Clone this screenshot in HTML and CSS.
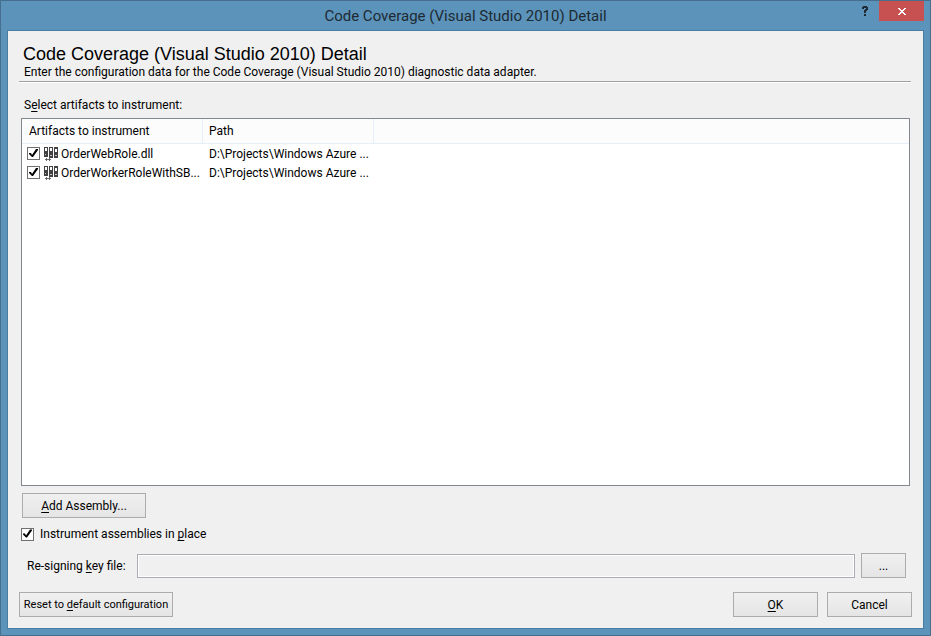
FILE: index.html
```html
<!DOCTYPE html>
<html lang="en">
<head>
<meta charset="utf-8">
<title>Code Coverage (Visual Studio 2010) Detail</title>
<link rel="stylesheet" href="styles.css">
</head>
<body>
<svg class="defs" aria-hidden="true">
  <symbol id="binders" viewBox="0 0 15 14">
    <path fill="#424242" d="M0 0h4v10H0zM5 0h4v11H5zM10 0h4v11h-4z"/>
    <path fill="#fff" d="M1 1h2v3H1zM6 1h2v3H6zM11 2h2v3h-2z"/>
    <path fill="#c8c8c8" d="M1 7h1v1H1zM6 8h2v1H6zM11 8h2v1h-2z"/>
    <path fill="#686868" d="M1 12h2v1H1zM2 11h1v3H2zM3 12h3v1H3zM5 11h1v3H5zM6 12h1v1H6z"/>
  </symbol>
</svg>
<div class="window">
  <header class="titlebar">
    <span class="titlebar-text">Code Coverage (Visual Studio 2010) Detail</span>
    <div class="caption-buttons">
      <button class="help" type="button" aria-label="Help"><svg width="6" height="10" viewBox="0 0 6 10"><path fill="#202a32" d="M1 0h4v1h1v3H5v1H4v2H2V4h1V3h1V2H2v1H0V1h1zM2 8h2v2H2z"/></svg></button>
      <button class="close" type="button" aria-label="Close"><svg width="8" height="7" viewBox="0 0 8 7"><path fill="#fff" d="M0 0h2v1h1v1h2V1h1V0h2v1H7v1H6v1H5v1h1v1h1v1h1v1H6V6H5V5H3v1H2v1H0V6h1V5h1V4h1V3H2V2H1V1H0z"/></svg></button>
    </div>
  </header>
  <main class="client">
    <div class="heading">
      <h1>Code Coverage (Visual Studio 2010) Detail</h1>
      <p>Enter the configuration data for the Code Coverage (Visual Studio 2010) diagnostic data adapter.</p>
    </div>
    <div class="list-label" id="list-label">S<u>e</u>lect artifacts to instrument:</div>
    <div class="list">
      <table aria-labelledby="list-label">
        <colgroup><col class="col-name"><col class="col-path"><col></colgroup>
        <thead>
          <tr><th>Artifacts to instrument</th><th>Path</th><td></td></tr>
        </thead>
        <tbody>
          <tr>
            <td><label class="item"><input type="checkbox" checked><svg class="icon"><use href="#binders"/></svg><span>OrderWebRole.dll</span></label></td>
            <td>D:\Projects\Windows Azure ...</td><td></td>
          </tr>
          <tr>
            <td><label class="item"><input type="checkbox" checked><svg class="icon"><use href="#binders"/></svg><span>OrderWorkerRoleWithSB...</span></label></td>
            <td>D:\Projects\Windows Azure ...</td><td></td>
          </tr>
        </tbody>
      </table>
    </div>
    <div class="options">
      <button class="btn add" type="button"><u>A</u>dd Assembly...</button>
      <label class="check"><input type="checkbox" checked><span>Instrument assemblies in <u>p</u>lace</span></label>
      <div class="key-row">
        <label for="key">Re-signing <u>k</u>ey file:</label>
        <input id="key" type="text" disabled>
        <button class="btn browse" type="button">...</button>
      </div>
    </div>
    <footer class="footer">
      <button class="btn reset" type="button">Reset to <u>d</u>efault configuration</button>
      <button class="btn" type="button"><u>O</u>K</button>
      <button class="btn" type="button">Cancel</button>
    </footer>
  </main>
</div>
</body>
</html>
```
FILE: styles.css
```css
* { box-sizing: border-box; }

body {
  margin: 0;
  font: 12px/16px Roboto, "Open Sans", sans-serif;
  color: #000;
}

.defs { display: none; }

u { text-decoration: underline; text-underline-offset: 2px; }

.window {
  display: flex;
  flex-direction: column;
  min-height: 100vh;
  padding: 0 6px 6px;
  background: #5b93ba;
  border: 1px solid #466f8d;
}

.titlebar {
  position: relative;
  display: flex;
  align-items: center;
  justify-content: center;
  height: 29px;
}

.titlebar-text { font-size: 15px; line-height: 20px; color: #1e2a33; }

.caption-buttons {
  position: absolute;
  top: 0;
  right: 0;
  display: flex;
}

.caption-buttons button {
  display: flex;
  align-items: center;
  justify-content: center;
  height: 20px;
  padding: 0;
  border: 0;
  background: none;
}

.caption-buttons .help { width: 28px; }
.caption-buttons .close { width: 45px; background: #c75050; }

.client {
  flex: 1;
  display: flex;
  flex-direction: column;
  padding: 13px 12px 11px 11px;
  background: #f0f0f0;
  border: 1px solid #4a7da3;
}

.heading {
  padding: 0 4px 1px;
  border-bottom: 1px solid #a0a0a0;
  box-shadow: 0 1px #fff;
}

h1 {
  margin: 0;
  font: 18px/20px "Liberation Sans", Arial, sans-serif;
}

.heading p { margin: 0 1px; }

.list-label { margin: 15px 5px 5px; }

.list {
  flex: 1;
  margin: 0 1px 0 2px;
  background: #fff;
  border: 1px solid #828790;
}

table {
  width: 100%;
  table-layout: fixed;
  border-collapse: separate;
  border-spacing: 0;
}

.col-name { width: 181px; }
.col-path { width: 171px; }

th, td {
  padding: 0 6px;
  height: 19px;
  font-weight: normal;
  text-align: left;
  white-space: nowrap;
}

thead th, thead td {
  height: 25px;
  background: #fcfcfc;
  border-bottom: 1px solid #e5effa;
}

thead th { border-right: 1px solid #e5effa; }
thead th:first-child { padding-left: 7px; }
tbody td:first-child { padding: 0 0 0 5px; }

.item { display: flex; align-items: center; }
.item .icon { width: 15px; height: 14px; margin: 0 2px 0 4px; flex: none; }

input[type="checkbox"] {
  appearance: none;
  flex: none;
  width: 13px;
  height: 13px;
  margin: 0;
  background: #fff;
  border: 1px solid #707070;
}

input[type="checkbox"]:checked::before {
  content: "";
  display: block;
  width: 11px;
  height: 11px;
  background: #000;
  clip-path: polygon(1px 5px, 3px 5px, 4px 7px, 8px 1px, 10px 1px, 10px 2px, 5px 9px, 4px 9px, 1px 6px);
}

.options {
  display: flex;
  flex-direction: column;
  align-items: flex-start;
  padding: 7px 5px 0 2px;
}

.btn {
  width: 85px;
  height: 25px;
  padding: 0;
  font: inherit;
  color: #000;
  white-space: nowrap;
  background: linear-gradient(#f0f0f0, #e5e5e5);
  border: 1px solid #acacac;
}

.btn.add { width: 124px; margin-left: 1px; }

.check { display: flex; align-items: center; gap: 6px; margin: 8px 0 11px; }

.key-row { display: flex; align-items: center; align-self: stretch; }
.key-row label { width: 116px; padding-left: 6px; white-space: nowrap; }

.key-row input {
  flex: 1;
  min-width: 0;
  height: 24px;
  margin-right: 6px;
  background: #f0f0f0;
  border: 1px solid #abadb3;
  box-shadow: inset 0 0 0 1px #fff;
}

.btn.browse { width: 45px; }

.footer { display: flex; gap: 9px; margin: 14px -1px 0 0; }
.btn.reset { width: 154px; margin-right: auto; font-size: 11px; }
```
